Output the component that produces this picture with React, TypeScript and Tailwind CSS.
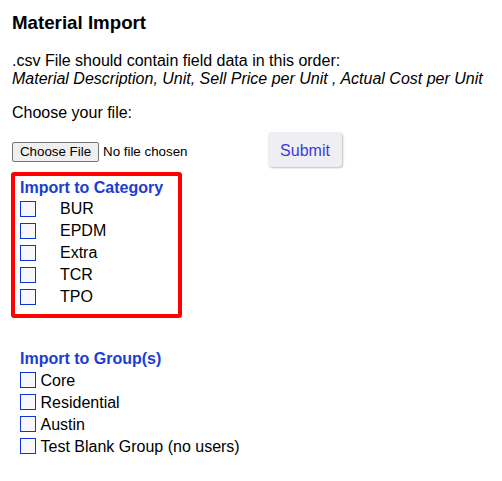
const CATEGORIES = ["BUR", "EPDM", "Extra", "TCR", "TPO"];
const GROUPS = ["Core", "Residential", "Austin", "Test Blank Group (no users)"];

function Box() {
  return (
    <span className="inline-block w-[16px] h-[16px] shrink-0 border border-[#0b35d4] bg-[#f8f8fc]" />
  );
}

export default function App() {
  return (
    <div className="min-h-[481px] bg-white px-[12px] pt-[12px] text-black text-[16px] leading-[18.4px] font-['Liberation_Sans',Arial,sans-serif]">
      <h3 className="text-[18.72px] leading-[21.5px] font-bold">Material Import</h3>

      <p className="mt-[18.5px]">
        .csv File should contain field data in this order:
        <br />
        <i>Material Description, Unit, Sell Price per Unit , Actual Cost per Unit</i>
      </p>

      <p className="mt-[15.2px]">Choose your file:</p>

      {/* file picker + submit */}
      <div className="mt-[9.6px] flex items-start h-[35px]">
        <div className="w-[256px] mt-[10px] flex items-center text-[13.33px] leading-[20px]">
          <span className="w-[87px] h-[20px] border border-[#767676] bg-[#efefef] rounded-[2px] flex items-center justify-center leading-none">
            Choose File
          </span>
          <span className="ml-[4px]">No file chosen</span>
        </div>
        <button className="w-[74px] h-[35px] pt-[3px] rounded-[4px] bg-[#efeff3] text-[#3a3ae0] text-[16px] shadow-[1px_1px_2px_rgba(0,0,0,0.25)]">
          Submit
        </button>
      </div>

      {/* category box */}
      <div className="mt-[5px] -ml-[1px] w-[171px] border-4 border-[#ff0000] rounded-[3px] pl-[5px] pt-[3.3px] pb-[6.5px]">
        <div className="font-bold text-[#1b3dd4]">Import to Category</div>
        <div className="flex flex-col">
          {CATEGORIES.map((c) => (
            <label key={c} className="h-[22px] flex items-center">
              <Box />
              <span className="ml-[24px] pt-[1px]">{c}</span>
            </label>
          ))}
        </div>
      </div>

      {/* groups */}
      <div className="mt-[31.3px] pl-[8px]">
        <div className="font-bold text-[#1b3dd4]">Import to Group(s)</div>
        <div className="flex flex-col mt-[1.5px]">
          {GROUPS.map((g) => (
            <label key={g} className="h-[22px] flex items-center">
              <Box />
              <span className="ml-[4.5px] pt-[2px]">{g}</span>
            </label>
          ))}
        </div>
      </div>
    </div>
  );
}
